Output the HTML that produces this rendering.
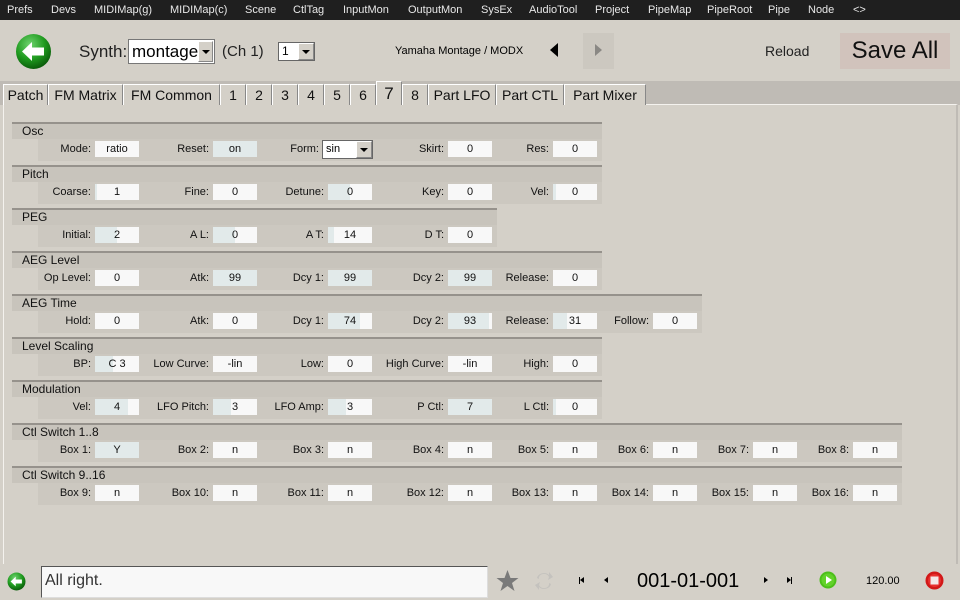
<!DOCTYPE html>
<html><head><meta charset="utf-8">
<style>
*{margin:0;padding:0;box-sizing:border-box}
body{width:960px;height:600px;background:#d4d0c8;font-family:"Liberation Sans",sans-serif;position:relative;overflow:hidden;color:#000}
.a{position:absolute}
#menu{left:0;top:0;width:960px;height:20px;background:#1f1f1f;color:#e8e8e8;font-size:11px}
#menu span{position:absolute;top:4px}
.tab{position:absolute;top:84px;height:21px;border:1px solid #888;border-bottom:none;border-top-color:#fff;border-left-color:#fff;background:#d4d0c8;font-size:14px;text-align:center;line-height:20px;color:#111}
.h{position:absolute;left:12px;height:17px;background:#c8c4bc;border-top:2px solid #96928c;font-size:12px;padding-left:10px;line-height:15px;color:#111}
.r{position:absolute;left:38px;height:22px;background:#ccc8c0}
.l{position:absolute;width:120px;text-align:right;font-size:11px;line-height:16px;color:#111}
.b{position:absolute;width:44px;height:16px;background:#f8f8f8;font-size:11px;line-height:16px;text-align:center;color:#111}
.b i{position:absolute;left:0;top:0;height:16px;background:#e2eaea}
.b s{position:relative;text-decoration:none}
</style></head><body>
<div id="menu" class="a">
<span style="left:7px">Prefs</span><span style="left:51px">Devs</span><span style="left:94px">MIDIMap(g)</span><span style="left:170px">MIDIMap(c)</span><span style="left:245px">Scene</span><span style="left:293px">CtlTag</span><span style="left:343px">InputMon</span><span style="left:408px">OutputMon</span><span style="left:481px">SysEx</span><span style="left:529px">AudioTool</span><span style="left:595px">Project</span><span style="left:648px">PipeMap</span><span style="left:707px">PipeRoot</span><span style="left:768px">Pipe</span><span style="left:808px">Node</span><span style="left:853px">&lt;&gt;</span>
</div>
<svg class="a" style="left:15px;top:33px" width="37" height="37" viewBox="0 0 37 37"><defs><radialGradient id="g" cx="40%" cy="30%" r="70%"><stop offset="0" stop-color="#6fd36f"/><stop offset="0.6" stop-color="#1f9a1f"/><stop offset="1" stop-color="#0b5e0b"/></radialGradient></defs><circle cx="18.5" cy="18.5" r="17.5" fill="url(#g)"/><path d="M7 18.5 L17 9 L17 14.5 L29 14.5 L29 22.5 L17 22.5 L17 28 Z" fill="#fff"/></svg>
<div class="a" style="left:79px;top:42px;font-size:17px;color:#222">Synth:</div>
<div class="a" style="left:128px;top:39px;width:87px;height:25px;background:#fff;border:1px solid #777;font-size:17px;line-height:23px;padding-left:3px">montage</div>
<div class="a" style="left:198px;top:41px;width:15px;height:21px;background:#d4d0c8;border:1px solid #888;border-top-color:#fff;border-left-color:#fff"><div class="a" style="left:3px;top:8px;border-left:4px solid transparent;border-right:4px solid transparent;border-top:4px solid #000"></div></div>
<div class="a" style="left:222px;top:43px;font-size:15px;color:#222">(Ch 1)</div>
<div class="a" style="left:278px;top:42px;width:37px;height:19px;background:#fff;border:1px solid #666;font-size:12px;line-height:17px;padding-left:3px">1</div>
<div class="a" style="left:298px;top:43px;width:16px;height:17px;background:#d4d0c8;border:1px solid #888;border-top-color:#fff;border-left-color:#fff"><div class="a" style="left:3px;top:6px;border-left:4px solid transparent;border-right:4px solid transparent;border-top:4px solid #000"></div></div>
<div class="a" style="left:395px;top:45px;font-size:11px">Yamaha Montage / MODX</div>
<div class="a" style="left:550px;top:43px;border-top:7px solid transparent;border-bottom:7px solid transparent;border-right:8px solid #000"></div>
<div class="a" style="left:583px;top:33px;width:31px;height:36px;background:#ccc8c0"></div>
<div class="a" style="left:595px;top:44px;border-top:6px solid transparent;border-bottom:6px solid transparent;border-left:7px solid #8a8884"></div>
<div class="a" style="left:765px;top:43px;font-size:14px;color:#222">Reload</div>
<div class="a" style="left:840px;top:33px;width:110px;height:36px;background:#d1c3bc;font-size:24px;text-align:center;line-height:36px;color:#111">Save All</div>
<div class="a" style="left:0;top:81px;width:960px;height:24px;background:#bfbbb5"></div>
<div class="a" style="left:3px;top:104px;width:955px;height:460px;border-left:1px solid #f4f2ee;border-top:1px solid #f4f2ee;border-right:2px solid #bfbbb5"></div>
<div class="tab" style="left:3px;width:45px">Patch</div>
<div class="tab" style="left:48px;width:75px">FM Matrix</div>
<div class="tab" style="left:123px;width:97px">FM Common</div>
<div class="tab" style="left:220px;width:26px">1</div>
<div class="tab" style="left:246px;width:26px">2</div>
<div class="tab" style="left:272px;width:26px">3</div>
<div class="tab" style="left:298px;width:26px">4</div>
<div class="tab" style="left:324px;width:26px">5</div>
<div class="tab" style="left:350px;width:26px">6</div>
<div class="tab" style="left:376px;width:26px;top:81px;height:24px;line-height:23px;font-size:17px">7</div>
<div class="tab" style="left:402px;width:26px">8</div>
<div class="tab" style="left:428px;width:68px">Part LFO</div>
<div class="tab" style="left:496px;width:68px">Part CTL</div>
<div class="tab" style="left:564px;width:82px">Part Mixer</div>

<!-- Osc -->
<div class="h" style="top:122px;width:590px">Osc</div><div class="r" style="top:139px;width:564px"></div>
<div class="l" style="left:-29px;top:141px">Mode:</div><div class="b" style="left:95px;top:141px"><s>ratio</s></div>
<div class="l" style="left:89px;top:141px">Reset:</div><div class="b" style="left:213px;top:141px"><i style="width:44px"></i><s>on</s></div>
<div class="l" style="left:199px;top:141px">Form:</div>
<div class="a" style="left:322px;top:140px;width:51px;height:19px;background:#fff;border:1px solid #666;font-size:11px;line-height:17px;padding-left:3px">sin</div>
<div class="a" style="left:356px;top:141px;width:16px;height:17px;background:#d4d0c8;border:1px solid #888;border-top-color:#fff;border-left-color:#fff"><div class="a" style="left:3px;top:6px;border-left:4px solid transparent;border-right:4px solid transparent;border-top:4px solid #000"></div></div>
<div class="l" style="left:324px;top:141px">Skirt:</div><div class="b" style="left:448px;top:141px"><s>0</s></div>
<div class="l" style="left:429px;top:141px">Res:</div><div class="b" style="left:553px;top:141px"><s>0</s></div>

<!-- Pitch -->
<div class="h" style="top:165px;width:590px">Pitch</div><div class="r" style="top:182px;width:564px"></div>
<div class="l" style="left:-29px;top:184px">Coarse:</div><div class="b" style="left:95px;top:184px"><i style="width:2px"></i><s>1</s></div>
<div class="l" style="left:89px;top:184px">Fine:</div><div class="b" style="left:213px;top:184px"><s>0</s></div>
<div class="l" style="left:204px;top:184px">Detune:</div><div class="b" style="left:328px;top:184px"><i style="width:22px"></i><s>0</s></div>
<div class="l" style="left:324px;top:184px">Key:</div><div class="b" style="left:448px;top:184px"><s>0</s></div>
<div class="l" style="left:429px;top:184px">Vel:</div><div class="b" style="left:553px;top:184px"><i style="width:3px"></i><s>0</s></div>

<!-- PEG -->
<div class="h" style="top:208px;width:485px">PEG</div><div class="r" style="top:225px;width:459px"></div>
<div class="l" style="left:-29px;top:227px">Initial:</div><div class="b" style="left:95px;top:227px"><i style="width:22px"></i><s>2</s></div>
<div class="l" style="left:89px;top:227px">A L:</div><div class="b" style="left:213px;top:227px"><i style="width:22px"></i><s>0</s></div>
<div class="l" style="left:204px;top:227px">A T:</div><div class="b" style="left:328px;top:227px"><i style="width:6px"></i><s>14</s></div>
<div class="l" style="left:324px;top:227px">D T:</div><div class="b" style="left:448px;top:227px"><s>0</s></div>

<!-- AEG Level -->
<div class="h" style="top:251px;width:590px">AEG Level</div><div class="r" style="top:268px;width:564px"></div>
<div class="l" style="left:-29px;top:270px">Op Level:</div><div class="b" style="left:95px;top:270px"><s>0</s></div>
<div class="l" style="left:89px;top:270px">Atk:</div><div class="b" style="left:213px;top:270px"><i style="width:44px"></i><s>99</s></div>
<div class="l" style="left:204px;top:270px">Dcy 1:</div><div class="b" style="left:328px;top:270px"><i style="width:44px"></i><s>99</s></div>
<div class="l" style="left:324px;top:270px">Dcy 2:</div><div class="b" style="left:448px;top:270px"><i style="width:44px"></i><s>99</s></div>
<div class="l" style="left:429px;top:270px">Release:</div><div class="b" style="left:553px;top:270px"><s>0</s></div>

<!-- AEG Time -->
<div class="h" style="top:294px;width:690px">AEG Time</div><div class="r" style="top:311px;width:664px"></div>
<div class="l" style="left:-29px;top:313px">Hold:</div><div class="b" style="left:95px;top:313px"><s>0</s></div>
<div class="l" style="left:89px;top:313px">Atk:</div><div class="b" style="left:213px;top:313px"><s>0</s></div>
<div class="l" style="left:204px;top:313px">Dcy 1:</div><div class="b" style="left:328px;top:313px"><i style="width:32px"></i><s>74</s></div>
<div class="l" style="left:324px;top:313px">Dcy 2:</div><div class="b" style="left:448px;top:313px"><i style="width:41px"></i><s>93</s></div>
<div class="l" style="left:429px;top:313px">Release:</div><div class="b" style="left:553px;top:313px"><i style="width:14px"></i><s>31</s></div>
<div class="l" style="left:529px;top:313px">Follow:</div><div class="b" style="left:653px;top:313px"><s>0</s></div>

<!-- Level Scaling -->
<div class="h" style="top:337px;width:590px">Level Scaling</div><div class="r" style="top:354px;width:564px"></div>
<div class="l" style="left:-29px;top:356px">BP:</div><div class="b" style="left:95px;top:356px"><i style="width:18px"></i><s>C 3</s></div>
<div class="l" style="left:89px;top:356px">Low Curve:</div><div class="b" style="left:213px;top:356px"><s>-lin</s></div>
<div class="l" style="left:204px;top:356px">Low:</div><div class="b" style="left:328px;top:356px"><s>0</s></div>
<div class="l" style="left:324px;top:356px">High Curve:</div><div class="b" style="left:448px;top:356px"><s>-lin</s></div>
<div class="l" style="left:429px;top:356px">High:</div><div class="b" style="left:553px;top:356px"><s>0</s></div>

<!-- Modulation -->
<div class="h" style="top:380px;width:590px">Modulation</div><div class="r" style="top:397px;width:564px"></div>
<div class="l" style="left:-29px;top:399px">Vel:</div><div class="b" style="left:95px;top:399px"><i style="width:33px"></i><s>4</s></div>
<div class="l" style="left:89px;top:399px">LFO Pitch:</div><div class="b" style="left:213px;top:399px"><i style="width:18px"></i><s>3</s></div>
<div class="l" style="left:204px;top:399px">LFO Amp:</div><div class="b" style="left:328px;top:399px"><i style="width:18px"></i><s>3</s></div>
<div class="l" style="left:324px;top:399px">P Ctl:</div><div class="b" style="left:448px;top:399px"><i style="width:44px"></i><s>7</s></div>
<div class="l" style="left:429px;top:399px">L Ctl:</div><div class="b" style="left:553px;top:399px"><i style="width:3px"></i><s>0</s></div>

<!-- Ctl Switch 1..8 -->
<div class="h" style="top:423px;width:890px">Ctl Switch 1..8</div><div class="r" style="top:440px;width:864px"></div>
<div class="l" style="left:-29px;top:442px">Box 1:</div><div class="b" style="left:95px;top:442px"><i style="width:44px"></i><s>Y</s></div>
<div class="l" style="left:89px;top:442px">Box 2:</div><div class="b" style="left:213px;top:442px"><s>n</s></div>
<div class="l" style="left:204px;top:442px">Box 3:</div><div class="b" style="left:328px;top:442px"><s>n</s></div>
<div class="l" style="left:324px;top:442px">Box 4:</div><div class="b" style="left:448px;top:442px"><s>n</s></div>
<div class="l" style="left:429px;top:442px">Box 5:</div><div class="b" style="left:553px;top:442px"><s>n</s></div>
<div class="l" style="left:529px;top:442px">Box 6:</div><div class="b" style="left:653px;top:442px"><s>n</s></div>
<div class="l" style="left:629px;top:442px">Box 7:</div><div class="b" style="left:753px;top:442px"><s>n</s></div>
<div class="l" style="left:729px;top:442px">Box 8:</div><div class="b" style="left:853px;top:442px"><s>n</s></div>

<!-- Ctl Switch 9..16 -->
<div class="h" style="top:466px;width:890px">Ctl Switch 9..16</div><div class="r" style="top:483px;width:864px"></div>
<div class="l" style="left:-29px;top:485px">Box 9:</div><div class="b" style="left:95px;top:485px"><s>n</s></div>
<div class="l" style="left:89px;top:485px">Box 10:</div><div class="b" style="left:213px;top:485px"><s>n</s></div>
<div class="l" style="left:204px;top:485px">Box 11:</div><div class="b" style="left:328px;top:485px"><s>n</s></div>
<div class="l" style="left:324px;top:485px">Box 12:</div><div class="b" style="left:448px;top:485px"><s>n</s></div>
<div class="l" style="left:429px;top:485px">Box 13:</div><div class="b" style="left:553px;top:485px"><s>n</s></div>
<div class="l" style="left:529px;top:485px">Box 14:</div><div class="b" style="left:653px;top:485px"><s>n</s></div>
<div class="l" style="left:629px;top:485px">Box 15:</div><div class="b" style="left:753px;top:485px"><s>n</s></div>
<div class="l" style="left:729px;top:485px">Box 16:</div><div class="b" style="left:853px;top:485px"><s>n</s></div>

<!-- bottom bar -->
<svg class="a" style="left:7px;top:572px" width="19" height="19" viewBox="0 0 37 37"><circle cx="18.5" cy="18.5" r="17.5" fill="url(#g)"/><path d="M7 18.5 L17 9 L17 14.5 L29 14.5 L29 22.5 L17 22.5 L17 28 Z" fill="#fff"/></svg>
<div class="a" style="left:41px;top:566px;width:447px;height:32px;background:#f8f8f8;border:1px solid #555;border-right-color:#ddd;border-bottom-color:#ddd;font-size:16px;line-height:28px;padding-left:3px;color:#333">All right.</div>
<svg class="a" style="left:495px;top:569px" width="25" height="24" viewBox="0 0 24 24"><path d="M12 1 L15 9 L23 9 L16.5 14 L19 22 L12 17 L5 22 L7.5 14 L1 9 L9 9 Z" fill="#7a7a7a"/></svg>
<svg class="a" style="left:534px;top:570px" width="20" height="22" viewBox="0 0 20 22"><path d="M3 8 A7 6 0 0 1 15 5 L15 2 L19 7 L14 10 L15 7 A5 4 0 0 0 5 9 Z M17 14 A7 6 0 0 1 5 17 L5 20 L1 15 L6 12 L5 15 A5 4 0 0 0 15 13 Z" fill="#c4c2be"/></svg>
<div class="a" style="left:579px;top:577px;width:1px;height:7px;background:#000"></div><div class="a" style="left:580px;top:577px;border-top:3.5px solid transparent;border-bottom:3.5px solid transparent;border-right:4px solid #000"></div>
<div class="a" style="left:604px;top:577px;border-top:3.5px solid transparent;border-bottom:3.5px solid transparent;border-right:4px solid #000"></div>
<div class="a" style="left:637px;top:570px;font-size:20px;color:#000">001-01-001</div>
<div class="a" style="left:764px;top:577px;border-top:3.5px solid transparent;border-bottom:3.5px solid transparent;border-left:4px solid #000"></div>
<div class="a" style="left:787px;top:577px;border-top:3.5px solid transparent;border-bottom:3.5px solid transparent;border-left:4px solid #000"></div><div class="a" style="left:791px;top:577px;width:1px;height:7px;background:#000"></div>
<svg class="a" style="left:819px;top:571px" width="18" height="18" viewBox="0 0 18 18"><circle cx="9" cy="9" r="8.5" fill="#4cbf1a"/><circle cx="9" cy="9" r="6.5" fill="#62d22a"/><path d="M7 5 L13 9 L7 13 Z" fill="#fff"/></svg>
<div class="a" style="left:866px;top:575px;font-size:11px">120.00</div>
<svg class="a" style="left:925px;top:571px" width="19" height="19" viewBox="0 0 19 19"><circle cx="9.5" cy="9.5" r="9" fill="#d21818"/><circle cx="9.5" cy="9.5" r="6.5" fill="#e83030"/><rect x="5.5" y="5.5" width="8" height="8" fill="#f4e8e8"/></svg>
</body></html>
